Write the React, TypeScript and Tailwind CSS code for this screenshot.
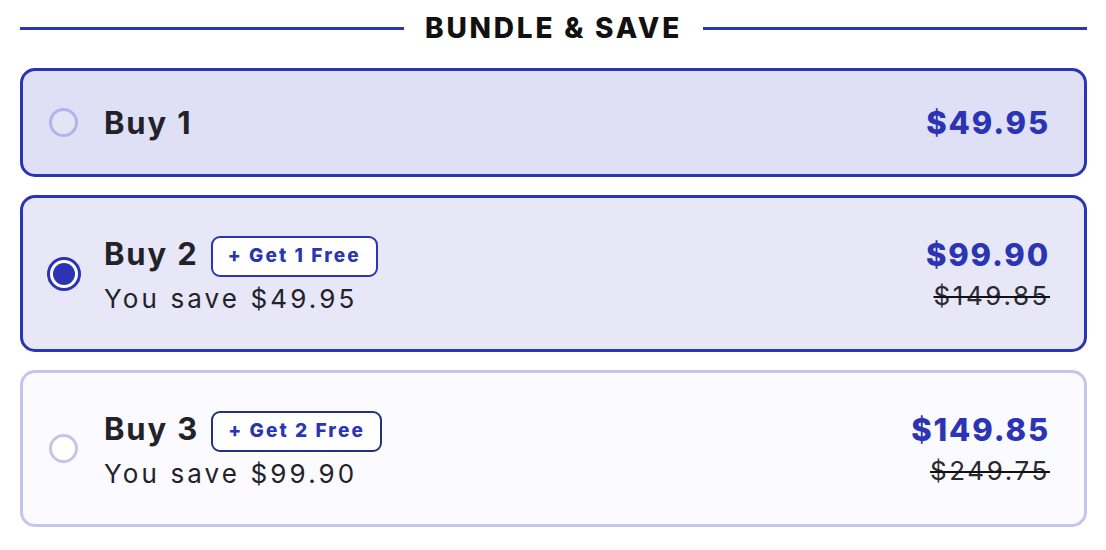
import React from "react";

type Tier = {
  label: string;
  badge?: string;
  save?: string;
  price: string;
  was?: string;
  selected?: boolean;
  tone: "active" | "chosen" | "idle";
};

const tiers: Tier[] = [
  { label: "Buy 1", price: "$49.95", tone: "active" },
  { label: "Buy 2", badge: "+ Get 1 Free", save: "You save $49.95", price: "$99.90", was: "$149.85", selected: true, tone: "chosen" },
  { label: "Buy 3", badge: "+ Get 2 Free", save: "You save $99.90", price: "$149.85", was: "$249.75", tone: "idle" },
];

function Radio({ on, tone }: { on?: boolean; tone: Tier["tone"] }) {
  if (on) {
    return (
      <span className="w-[34px] h-[34px] rounded-full border-[3px] border-[#2a34b4] bg-white flex items-center justify-center shrink-0">
        <span className="w-[22px] h-[22px] rounded-full bg-[#2a34b4]" />
      </span>
    );
  }
  return (
    <span
      className={`w-[29px] h-[29px] rounded-full border-[3px] shrink-0 ml-[2px] mr-[3px] ${
        tone === "idle" ? "border-[#c3c5ec] bg-white" : "border-[#b1b4e8] bg-[#e3e4f7]"
      }`}
    />
  );
}

function Card({ t }: { t: Tier }) {
  const box =
    t.tone === "active"
      ? "h-[109px] border-[#2a34b4] bg-[#dfe0f5]"
      : t.tone === "chosen"
      ? "h-[157px] border-[#2a34b4] bg-[#e7e7f8]"
      : "h-[157px] border-[#c3c5ec] bg-[#fafaff]";
  return (
    <div className={`rounded-[15px] border-[3px] flex items-center pl-[24px] pr-[34px] ${box}`}>
      <Radio on={t.selected} tone={t.tone} />
      <div className="ml-[23px] flex flex-col">
        <div className="flex items-center">
          <span className="text-[31px] leading-[40px] font-bold tracking-[0.06em] text-[#222228]">{t.label}</span>
          {t.badge && (
            <span className={`ml-[12px] mt-[4px] h-[41px] px-[15px] rounded-[9px] border-2 bg-white flex items-center text-[19px] font-extrabold tracking-[0.11em] text-[#2a34b4] ${t.tone === "idle" ? "border-[#253080]" : "border-[#2a34b4]"}`}>
              {t.badge}
            </span>
          )}
        </div>
        {t.save && (
          <span className="mt-[5px] text-[26px] leading-[34px] tracking-[0.12em] text-[#222228]">{t.save}</span>
        )}
      </div>
      <div className="ml-auto flex flex-col items-end">
        <span className="text-[31px] leading-[40px] font-extrabold tracking-[0.06em] text-[#2a34b4]">{t.price}</span>
        {t.was && (
          <span className="mt-[4px] text-[26px] leading-[34px] tracking-[0.1em] text-[#2a2a30] line-through decoration-[2px] decoration-[#111]">
            {t.was}
          </span>
        )}
      </div>
    </div>
  );
}

export default function App() {
  return (
    <div className="w-[1106px] h-[550px] bg-white pl-[20px] pr-[19px] pt-[9px]" style={{ fontFamily: "Inter, 'Noto Sans', sans-serif" }}>
      <div className="flex items-center h-[38px]">
        <div className="flex-1 h-[3px] bg-[#2a34b4]" />
        <span className="px-[21px] text-[28px] font-extrabold tracking-[0.1em] text-[#111] leading-none">BUNDLE &amp; SAVE</span>
        <div className="flex-1 h-[3px] bg-[#2a34b4]" />
      </div>
      <div className="mt-[21px] flex flex-col gap-[18px]">
        {tiers.map((t) => (
          <Card key={t.label} t={t} />
        ))}
      </div>
    </div>
  );
}
